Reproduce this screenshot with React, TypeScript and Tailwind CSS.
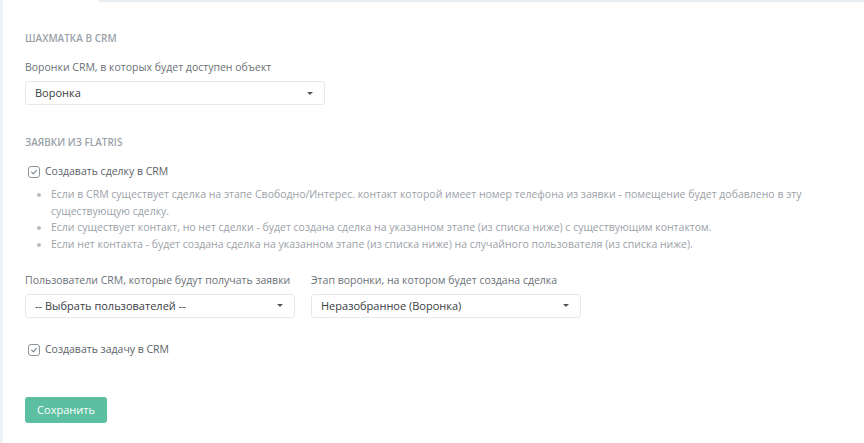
import React from "react";

const font = { fontFamily: '"Open Sans", "Noto Sans", sans-serif' };

function Select({ value, className = "" }: { value: string; className?: string }) {
    return (
        <div
            className={`flex h-[24px] items-center justify-between rounded-[3px] border border-[#e6e9ec] bg-white pl-[9px] pr-[11px] text-[11px] text-[#383d42] ${className}`}
        >
            <span>{value}</span>
            <span className="h-0 w-0 border-x-[3px] border-t-[3px] border-x-transparent border-t-[#555]" />
        </div>
    );
}

function Check({ label }: { label: string }) {
    return (
        <label className="flex h-[14px] items-center gap-[5px] text-[10.5px] text-[#5c6268]">
            <span className="flex h-[12px] w-[12px] items-center justify-center rounded-[3px] border border-[#8c949b] bg-white">
                <svg viewBox="0 0 10 10" className="h-[8px] w-[8px]">
                    <path d="M2 5.2 L4.2 7.3 L8 3" fill="none" stroke="#7b848c" strokeWidth="1.4" strokeLinecap="round" strokeLinejoin="round" />
                </svg>
            </span>
            {label}
        </label>
    );
}

function SectionTitle({ children }: { children: React.ReactNode }) {
    return <div className="text-[10px] font-semibold uppercase leading-[14px] text-[#9aa2aa]">{children}</div>;
}

function Label({ children }: { children: React.ReactNode }) {
    return <div className="text-[10.5px] leading-[14px] text-[#6b7177]">{children}</div>;
}

export default function App() {
    return (
        <div style={font} className="flex h-[443px] w-[864px] overflow-hidden bg-white">
            <div className="w-[3px] shrink-0 bg-[#eef3f8]" />
            <div className="flex flex-1 flex-col">
                <div className="ml-[96px] h-[2px] bg-[#e9eef3]" />
                <div className="flex flex-col pl-[22px] pt-[29px]">
                    <SectionTitle>Шахматка в CRM</SectionTitle>

                    <div className="mt-[15px]">
                        <Label>Воронки CRM, в которых будет доступен объект</Label>
                    </div>
                    <Select value="Воронка" className="mt-[7px] w-[300px]" />

                    <div className="mt-[30px]">
                        <SectionTitle>Заявки из Flatris</SectionTitle>
                    </div>

                    <div className="mt-[16px] pl-[3px]">
                        <Check label="Создавать сделку в CRM" />
                    </div>

                    <ul className="mt-[7px] list-disc pl-[26px] text-[10.5px] leading-[16.7px] text-[#9ca2a8] marker:text-[#b5babf]">
                        <li>
                            Если в CRM существует сделка на этапе Свободно/Интерес. контакт которой имеет номер телефона из заявки - помещение будет добавлено в эту
                            существующую сделку.
                        </li>
                        <li>Если существует контакт, но нет сделки - будет создана сделка на указанном этапе (из списка ниже) с существующим контактом.</li>
                        <li>Если нет контакта - будет создана сделка на указанном этапе (из списка ниже) на случайного пользователя (из списка ниже).</li>
                    </ul>

                    <div className="mt-[20px] flex gap-[16px]">
                        <div className="flex w-[270px] flex-col">
                            <Label>Пользователи CRM, которые будут получать заявки</Label>
                            <Select value="-- Выбрать пользователей --" className="mt-[7px]" />
                        </div>
                        <div className="flex w-[270px] flex-col">
                            <Label>Этап воронки, на котором будет создана сделка</Label>
                            <Select value="Неразобранное (Воронка)" className="mt-[7px]" />
                        </div>
                    </div>

                    <div className="mt-[25px] pl-[3px]">
                        <Check label="Создавать задачу в CRM" />
                    </div>

                    <button className="mt-[40px] h-[26px] w-[82px] rounded-[3px] bg-[#5cbfa1] text-[11px] text-white">Сохранить</button>
                </div>
            </div>
        </div>
    );
}
